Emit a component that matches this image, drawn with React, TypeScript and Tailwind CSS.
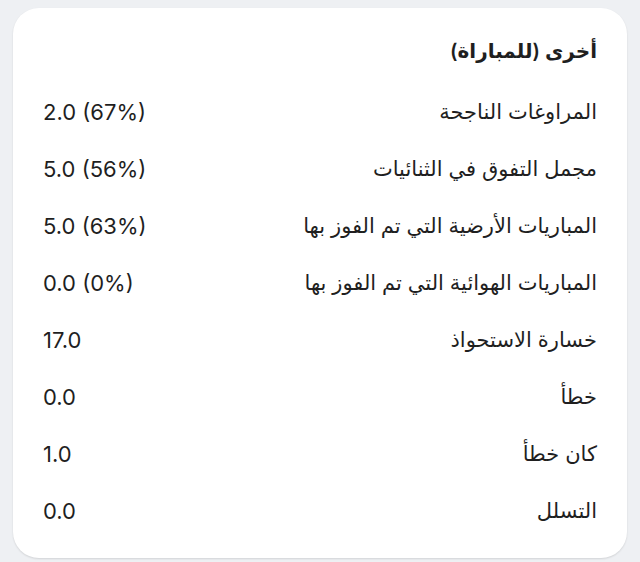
const rows = [
  { label: "المراوغات الناجحة", value: "2.0 (67%)" },
  { label: "مجمل التفوق في الثنائيات", value: "5.0 (56%)" },
  { label: "المباريات الأرضية التي تم الفوز بها", value: "5.0 (63%)" },
  { label: "المباريات الهوائية التي تم الفوز بها", value: "0.0 (0%)" },
  { label: "خسارة الاستحواذ", value: "17.0" },
  { label: "خطأ", value: "0.0" },
  { label: "كان خطأ", value: "1.0" },
  { label: "التسلل", value: "0.0" },
];

export default function App() {
  return (
    <div
      className="min-h-[562px] w-[640px] bg-[#eef0f3] pl-[13px] pr-[13px] pt-[8px] pb-[4px]"
      style={{ fontFamily: "Inter, 'Noto Sans', 'DejaVu Sans', sans-serif" }}
    >
      <div
        dir="rtl"
        className="h-[550px] rounded-[26px] bg-white px-[30px] pt-[29px] text-[#1f1f1f] shadow-[0_1px_2px_rgba(0,0,0,0.12)]"
      >
        <h2 className="text-[20px] font-semibold leading-[28px]">أخرى (للمباراة)</h2>
        <div className="mt-[33px] flex flex-col gap-[29px]">
          {rows.map((r) => (
            <div key={r.label} className="flex items-center justify-between">
              <span className="text-[21px] leading-[28px]">{r.label}</span>
              <span dir="ltr" className="text-[22px] leading-[28px]">
                {r.value}
              </span>
            </div>
          ))}
        </div>
      </div>
    </div>
  );
}
